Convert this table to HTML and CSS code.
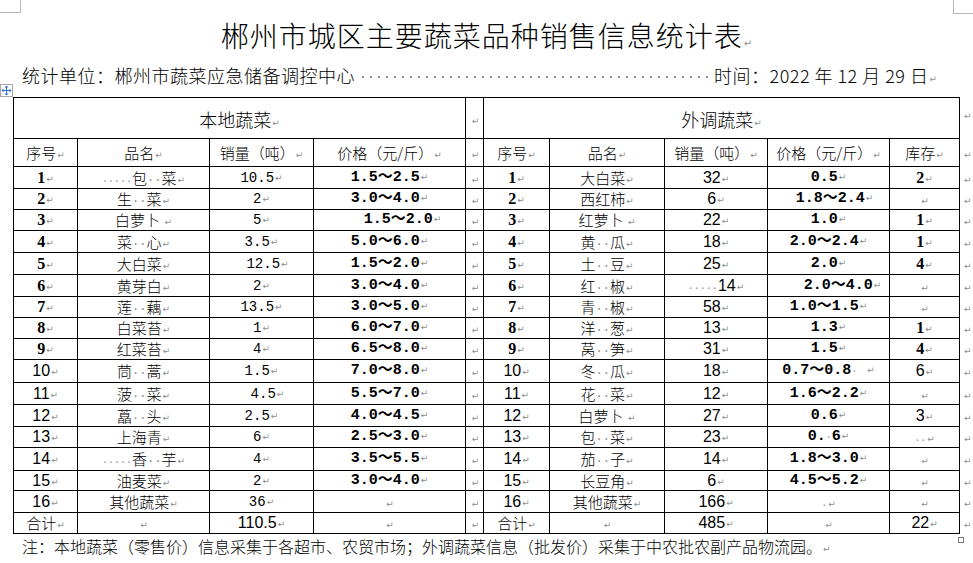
FILE: index.html
```html
<!DOCTYPE html>
<html lang="zh-CN">
<head>
<meta charset="utf-8">
<title>郴州市城区主要蔬菜品种销售信息统计表</title>
<link rel="stylesheet" href="styles.css">
</head>
<body>
<div class="crop crop-tl"></div>
<div class="crop crop-tr"></div>

<h1 class="title">郴州市城区主要蔬菜品种销售信息统计表<i class="pm">↵</i></h1>

<div class="meta">
  <span class="unit">统计单位：郴州市蔬菜应急储备调控中心</span>
  <span class="fill"></span>
  <span class="date">时间：2022 年 12 月 29 日<i class="pm">↵</i></span>
</div>

<div class="move-handle">
  <svg width="11" height="11" viewBox="0 0 11 11"><path d="M5.5 0.5 L3.5 2.5 H5 V5 H2.5 V3.5 L0.5 5.5 L2.5 7.5 V6 H5 V8.5 H3.5 L5.5 10.5 L7.5 8.5 H6 V6 H8.5 V7.5 L10.5 5.5 L8.5 3.5 V5 H6 V2.5 H7.5 Z" fill="#2f6fd6"/></svg>
</div>

<table class="grid">
  <colgroup>
    <col class="c1"><col class="c2"><col class="c3"><col class="c4"><col class="c5">
    <col class="c6"><col class="c7"><col class="c8"><col class="c9"><col class="c10"><col class="c11">
  </colgroup>
  <tr class="hd1">
    <td colspan="4" class="sec">本地蔬菜<i class="pm">↵</i></td>
    <td class="sep"><i class="pm">↵</i></td>
    <td colspan="5" class="sec">外调蔬菜<i class="pm">↵</i></td>
    <td class="eol top"><i class="pm">↵</i></td>
  </tr>
  <tr class="hd2">
    <td>序号<i class="pm">↵</i></td>
    <td>品名<i class="pm">↵</i></td>
    <td>销量（吨）<i class="pm">↵</i></td>
    <td>价格（元/斤）<i class="pm">↵</i></td>
    <td class="sep"><i class="pm">↵</i></td>
    <td>序号<i class="pm">↵</i></td>
    <td>品名<i class="pm">↵</i></td>
    <td>销量（吨）<i class="pm">↵</i></td>
    <td>价格（元/斤）<i class="pm">↵</i></td>
    <td>库存<i class="pm">↵</i></td>
    <td class="eol"><i class="pm">↵</i></td>
  </tr>
  <tr class="h22">
    <td class="sq s">1<i class="pm">↵</i></td>
    <td><b class="d">·····</b>包<b class="d2">··</b>菜<i class="pm">↵</i></td>
    <td class="ql">10.5<i class="pm">↵</i></td>
    <td class="pr">1.5～2.5<i class="pm">↵</i></td>
    <td class="sep"><i class="pm">↵</i></td>
    <td class="sq s">1<i class="pm">↵</i></td>
    <td>大白菜<i class="pm">↵</i></td>
    <td class="qr">32<i class="pm">↵</i></td>
    <td class="pr">0.5<i class="pm">↵</i></td>
    <td class="sq s">2<i class="pm">↵</i></td>
    <td class="eol"><i class="pm">↵</i></td>
  </tr>
  <tr class="h21">
    <td class="sq s">2<i class="pm">↵</i></td>
    <td>生<b class="d2">··</b>菜<i class="pm">↵</i></td>
    <td class="ql">2<i class="pm">↵</i></td>
    <td class="pr">3.0～4.0<i class="pm">↵</i></td>
    <td class="sep"><i class="pm">↵</i></td>
    <td class="sq s">2<i class="pm">↵</i></td>
    <td>西红柿<i class="pm">↵</i></td>
    <td class="qr">6<i class="pm">↵</i></td>
    <td class="pr ind">1.8～2.4<i class="pm">↵</i></td>
    <td><i class="pm">↵</i></td>
    <td class="eol"><i class="pm">↵</i></td>
  </tr>
  <tr class="h21">
    <td class="sq s">3<i class="pm">↵</i></td>
    <td>白萝卜 <i class="pm">↵</i></td>
    <td class="ql">5<i class="pm">↵</i></td>
    <td class="pr ind2">1.5～2.0<i class="pm">↵</i></td>
    <td class="sep"><i class="pm">↵</i></td>
    <td class="sq s">3<i class="pm">↵</i></td>
    <td>红萝卜 <i class="pm">↵</i></td>
    <td class="qr">22<i class="pm">↵</i></td>
    <td class="pr">1.0<i class="pm">↵</i></td>
    <td class="sq s">1<i class="pm">↵</i></td>
    <td class="eol"><i class="pm">↵</i></td>
  </tr>
  <tr class="h22">
    <td class="sq s">4<i class="pm">↵</i></td>
    <td>菜<b class="d2">··</b>心<i class="pm">↵</i></td>
    <td class="ql">3.5<i class="pm">↵</i></td>
    <td class="pr">5.0～6.0<i class="pm">↵</i></td>
    <td class="sep"><i class="pm">↵</i></td>
    <td class="sq s">4<i class="pm">↵</i></td>
    <td>黄<b class="d2">··</b>瓜<i class="pm">↵</i></td>
    <td class="qr">18<i class="pm">↵</i></td>
    <td class="pr">2.0～2.4<i class="pm">↵</i></td>
    <td class="sq s">1<i class="pm">↵</i></td>
    <td class="eol"><i class="pm">↵</i></td>
  </tr>
  <tr class="h22">
    <td class="sq s">5<i class="pm">↵</i></td>
    <td>大白菜<i class="pm">↵</i></td>
    <td class="ql ind">12.5<i class="pm">↵</i></td>
    <td class="pr">1.5～2.0<i class="pm">↵</i></td>
    <td class="sep"><i class="pm">↵</i></td>
    <td class="sq s">5<i class="pm">↵</i></td>
    <td>土<b class="d2">··</b>豆<i class="pm">↵</i></td>
    <td class="qr">25<i class="pm">↵</i></td>
    <td class="pr">2.0<i class="pm">↵</i></td>
    <td class="sq s">4<i class="pm">↵</i></td>
    <td class="eol"><i class="pm">↵</i></td>
  </tr>
  <tr class="h22">
    <td class="sq s">6<i class="pm">↵</i></td>
    <td>黄芽白<i class="pm">↵</i></td>
    <td class="ql">2<i class="pm">↵</i></td>
    <td class="pr">3.0～4.0<i class="pm">↵</i></td>
    <td class="sep"><i class="pm">↵</i></td>
    <td class="sq s">6<i class="pm">↵</i></td>
    <td>红<b class="d2">··</b>椒<i class="pm">↵</i></td>
    <td class="qr"><b class="d">·····</b>14<i class="pm">↵</i></td>
    <td class="pr ind3">2.0～4.0<i class="pm">↵</i></td>
    <td><i class="pm">↵</i></td>
    <td class="eol"><i class="pm">↵</i></td>
  </tr>
  <tr class="h21">
    <td class="sq s">7<i class="pm">↵</i></td>
    <td>莲<b class="d2">··</b>藕<i class="pm">↵</i></td>
    <td class="ql">13.5<i class="pm">↵</i></td>
    <td class="pr">3.0～5.0<i class="pm">↵</i></td>
    <td class="sep"><i class="pm">↵</i></td>
    <td class="sq s">7<i class="pm">↵</i></td>
    <td>青<b class="d2">··</b>椒<i class="pm">↵</i></td>
    <td class="qr">58<i class="pm">↵</i></td>
    <td class="pr">1.0～1.5<i class="pm">↵</i></td>
    <td><i class="pm">↵</i></td>
    <td class="eol"><i class="pm">↵</i></td>
  </tr>
  <tr class="h21">
    <td class="sq s">8<i class="pm">↵</i></td>
    <td>白菜苔<i class="pm">↵</i></td>
    <td class="ql">1<i class="pm">↵</i></td>
    <td class="pr">6.0～7.0<i class="pm">↵</i></td>
    <td class="sep"><i class="pm">↵</i></td>
    <td class="sq s">8<i class="pm">↵</i></td>
    <td>洋<b class="d2">··</b>葱<i class="pm">↵</i></td>
    <td class="qr">13<i class="pm">↵</i></td>
    <td class="pr">1.3<i class="pm">↵</i></td>
    <td class="sq s">1<i class="pm">↵</i></td>
    <td class="eol"><i class="pm">↵</i></td>
  </tr>
  <tr class="h21">
    <td class="sq s">9<i class="pm">↵</i></td>
    <td>红菜苔<i class="pm">↵</i></td>
    <td class="ql">4<i class="pm">↵</i></td>
    <td class="pr">6.5～8.0<i class="pm">↵</i></td>
    <td class="sep"><i class="pm">↵</i></td>
    <td class="sq s">9<i class="pm">↵</i></td>
    <td>莴<b class="d2">··</b>笋<i class="pm">↵</i></td>
    <td class="qr">31<i class="pm">↵</i></td>
    <td class="pr">1.5<i class="pm">↵</i></td>
    <td class="sq s">4<i class="pm">↵</i></td>
    <td class="eol"><i class="pm">↵</i></td>
  </tr>
  <tr class="h23">
    <td class="sq">10<i class="pm">↵</i></td>
    <td>茼<b class="d2">··</b>蒿<i class="pm">↵</i></td>
    <td class="ql">1.5<i class="pm">↵</i></td>
    <td class="pr">7.0～8.0<i class="pm">↵</i></td>
    <td class="sep"><i class="pm">↵</i></td>
    <td class="sq">10<i class="pm">↵</i></td>
    <td>冬<b class="d2">··</b>瓜<i class="pm">↵</i></td>
    <td class="qr">18<i class="pm">↵</i></td>
    <td class="pr">0.7～0.8<b class="d">·</b> <i class="pm">↵</i></td>
    <td class="qr">6<i class="pm">↵</i></td>
    <td class="eol"><i class="pm">↵</i></td>
  </tr>
  <tr class="h22">
    <td class="sq">11<i class="pm">↵</i></td>
    <td>菠<b class="d2">··</b>菜<i class="pm">↵</i></td>
    <td class="ql ind">4.5<i class="pm">↵</i></td>
    <td class="pr">5.5～7.0<i class="pm">↵</i></td>
    <td class="sep"><i class="pm">↵</i></td>
    <td class="sq">11<i class="pm">↵</i></td>
    <td>花<b class="d2">··</b>菜<i class="pm">↵</i></td>
    <td class="qr">12<i class="pm">↵</i></td>
    <td class="pr">1.6～2.2<i class="pm">↵</i></td>
    <td><i class="pm">↵</i></td>
    <td class="eol"><i class="pm">↵</i></td>
  </tr>
  <tr class="h22">
    <td class="sq">12<i class="pm">↵</i></td>
    <td>藠<b class="d2">··</b>头<i class="pm">↵</i></td>
    <td class="ql">2.5<i class="pm">↵</i></td>
    <td class="pr">4.0～4.5<i class="pm">↵</i></td>
    <td class="sep"><i class="pm">↵</i></td>
    <td class="sq">12<i class="pm">↵</i></td>
    <td>白萝卜 <i class="pm">↵</i></td>
    <td class="qr">27<i class="pm">↵</i></td>
    <td class="pr">0.6<i class="pm">↵</i></td>
    <td class="qr">3<i class="pm">↵</i></td>
    <td class="eol"><i class="pm">↵</i></td>
  </tr>
  <tr class="h21">
    <td class="sq">13<i class="pm">↵</i></td>
    <td>上海青<i class="pm">↵</i></td>
    <td class="ql">6<i class="pm">↵</i></td>
    <td class="pr">2.5～3.0<i class="pm">↵</i></td>
    <td class="sep"><i class="pm">↵</i></td>
    <td class="sq">13<i class="pm">↵</i></td>
    <td>包<b class="d2">··</b>菜<i class="pm">↵</i></td>
    <td class="qr">23<i class="pm">↵</i></td>
    <td class="pr">0.<b class="d">·</b>6<i class="pm">↵</i></td>
    <td><b class="d">··</b><i class="pm">↵</i></td>
    <td class="eol"><i class="pm">↵</i></td>
  </tr>
  <tr class="h23">
    <td class="sq">14<i class="pm">↵</i></td>
    <td><b class="d">·····</b>香<b class="d2">··</b>芋<i class="pm">↵</i></td>
    <td class="ql">4<i class="pm">↵</i></td>
    <td class="pr">3.5～5.5<i class="pm">↵</i></td>
    <td class="sep"><i class="pm">↵</i></td>
    <td class="sq">14<i class="pm">↵</i></td>
    <td>茄<b class="d2">··</b>子<i class="pm">↵</i></td>
    <td class="qr">14<i class="pm">↵</i></td>
    <td class="pr">1.8～3.0<i class="pm">↵</i></td>
    <td><i class="pm">↵</i></td>
    <td class="eol"><i class="pm">↵</i></td>
  </tr>
  <tr class="h20">
    <td class="sq">15<i class="pm">↵</i></td>
    <td>油麦菜<i class="pm">↵</i></td>
    <td class="ql">2<i class="pm">↵</i></td>
    <td class="pr">3.0～4.0<i class="pm">↵</i></td>
    <td class="sep"><i class="pm">↵</i></td>
    <td class="sq">15<i class="pm">↵</i></td>
    <td>长豆角<i class="pm">↵</i></td>
    <td class="qr">6<i class="pm">↵</i></td>
    <td class="pr">4.5～5.2<i class="pm">↵</i></td>
    <td><i class="pm">↵</i></td>
    <td class="eol"><i class="pm">↵</i></td>
  </tr>
  <tr class="h22">
    <td class="sq">16<i class="pm">↵</i></td>
    <td>其他蔬菜<i class="pm">↵</i></td>
    <td class="ql">36<i class="pm">↵</i></td>
    <td><i class="pm">↵</i></td>
    <td class="sep"><i class="pm">↵</i></td>
    <td class="sq">16<i class="pm">↵</i></td>
    <td>其他蔬菜<i class="pm">↵</i></td>
    <td class="qr">166<i class="pm">↵</i></td>
    <td><b class="d">·</b><i class="pm">↵</i></td>
    <td><i class="pm">↵</i></td>
    <td class="eol"><i class="pm">↵</i></td>
  </tr>
  <tr class="h21">
    <td>合计<i class="pm">↵</i></td>
    <td><i class="pm">↵</i></td>
    <td class="qr">110.5<i class="pm">↵</i></td>
    <td><i class="pm">↵</i></td>
    <td class="sep"><i class="pm">↵</i></td>
    <td>合计<i class="pm">↵</i></td>
    <td><i class="pm">↵</i></td>
    <td class="qr">485<i class="pm">↵</i></td>
    <td><i class="pm">↵</i></td>
    <td class="qr">22<i class="pm">↵</i></td>
    <td class="eol"><i class="pm">↵</i></td>
  </tr>
</table>

<div class="resize-handle"></div>

<p class="note">注：本地蔬菜（零售价）信息采集于各超市、农贸市场；外调蔬菜信息（批发价）采集于中农批农副产品物流园。<i class="pm">↵</i></p>
</body>
</html>
```

FILE: styles.css
```css
html, body {
  margin: 0;
  padding: 0;
  background: #fff;
}

body {
  position: relative;
  width: 973px;
  height: 563px;
  overflow: hidden;
  font-family: "Noto Sans CJK SC", "Noto Sans", sans-serif;
  font-weight: 300;
  color: #000;
}

/* page crop marks */
.crop {
  position: absolute;
  top: 0;
  width: 20px;
  border-bottom: 1px solid #b8b8b8;
}
.crop-tl {
  left: 0;
  height: 12px;
  border-right: 1px solid #b8b8b8;
}
.crop-tr {
  left: 953px;
  height: 13px;
  border-left: 1px solid #b8b8b8;
}

/* paragraph marks and space dots */
.pm {
  font-style: normal;
  font-weight: normal;
  font-family: "DejaVu Sans", sans-serif;
  font-size: 9px;
  line-height: 0;
  letter-spacing: 0;
  color: #8e8e8e;
  margin-left: 1px;
  vertical-align: 1px;
}
.d, .d2 {
  font-weight: normal;
  font-family: "Liberation Mono", monospace;
  line-height: 0;
  color: #8e8e8e;
}
.d { font-size: 10px; }
.d2 { font-size: 12px; }

.title {
  margin: 0;
  padding: 14px 20px 0;
  height: 42px;
  line-height: 42px;
  text-align: center;
  font-size: 28px;
  letter-spacing: 1px;
  font-weight: 300;
}
.title .pm { font-size: 10px; vertical-align: 0; }

.meta {
  display: flex;
  align-items: center;
  height: 26px;
  margin: 6px 36px 0 22px;
  font-size: 18px;
  letter-spacing: 0.5px;
  white-space: nowrap;
}
.fill {
  flex: 1;
  align-self: stretch;
  margin: 0 2px;
  background-image: radial-gradient(circle, #8e8e8e 0 0.9px, transparent 1.3px);
  background-size: 8px 8px;
  background-repeat: repeat-x;
  background-position: 2px 11px;
}

.move-handle {
  position: absolute;
  left: 0;
  top: 84px;
  width: 11px;
  height: 11px;
  border: 1px solid #a8a8a8;
  background: #fff;
  line-height: 0;
}

.resize-handle {
  position: absolute;
  left: 958px;
  top: 537px;
  width: 4px;
  height: 4px;
  border: 1px solid #777;
  background: #fff;
}

/* table */
.grid {
  border-collapse: collapse;
  table-layout: fixed;
  width: 960px;
  margin: 9px 0 0 13px;
}
.c1 { width: 64px; }
.c2 { width: 132px; }
.c3 { width: 104px; }
.c4 { width: 152px; }
.c5 { width: 18px; }
.c6 { width: 66px; }
.c7 { width: 115px; }
.c8 { width: 103px; }
.c9 { width: 122px; }
.c10 { width: 70px; }
.c11 { width: 14px; }

.grid td {
  border: 1px solid #000;
  padding: 0;
  text-align: center;
  vertical-align: middle;
  white-space: nowrap;
  overflow: hidden;
  font-size: 15px;
  line-height: 16px;
}
.grid td.eol {
  border: none;
  text-align: left;
  padding-left: 3px;
}
.grid td.eol.top { vertical-align: top; padding-top: 8px; }
.grid td.sep { padding-left: 1px; }

.hd1 { height: 41px; }
.hd1 td { padding-top: 2px; }
.hd2 { height: 28px; }
.sec { font-size: 18px !important; line-height: 20px !important; }

.h20 { height: 20px; }
.h21 { height: 21px; }
.h22 { height: 22px; }
.h23 { height: 23px; }

.sq {
  font-family: "Liberation Sans", sans-serif;
  font-weight: normal;
  font-size: 16px !important;
}
.sq.s {
  font-family: "Liberation Serif", serif;
  font-weight: bold;
}
.ql {
  font-family: "Liberation Mono", "Noto Sans CJK SC", monospace;
  font-weight: normal;
  font-size: 14px !important;
}
.qr {
  font-family: "Liberation Sans", sans-serif;
  font-weight: normal;
  font-size: 16px !important;
}
.pr {
  font-family: "Liberation Mono", "Noto Sans CJK SC", monospace;
  font-weight: bold;
  font-size: 15px !important;
}
.ind { padding-left: 12px !important; }
.ind2 { padding-left: 26px !important; }
.ind3 { padding-left: 28px !important; }

.note {
  margin: 1px 0 0 22px;
  font-size: 16px;
  line-height: 22px;
  white-space: nowrap;
}
```
